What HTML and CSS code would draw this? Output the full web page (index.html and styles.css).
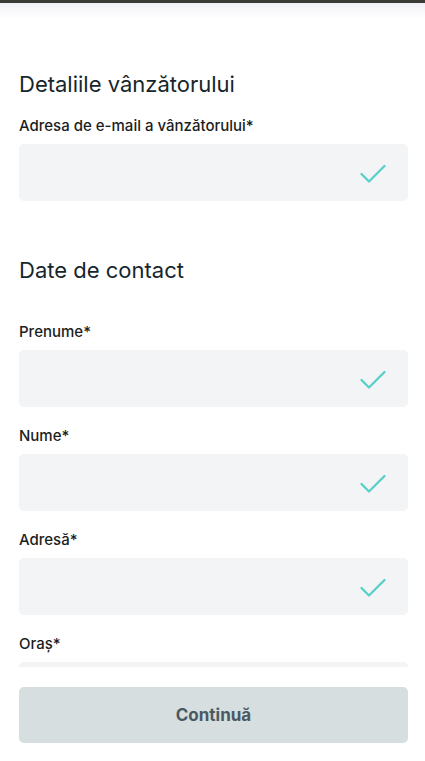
FILE: index.html
```html
<!DOCTYPE html>
<html lang="ro">
<head>
<meta charset="utf-8">
<title>Detaliile vânzătorului</title>
<link rel="stylesheet" href="styles.css">
</head>
<body>
<div class="topbar"></div>
<div class="topfade"></div>
<main class="form">
  <section class="section section-seller">
    <h2 class="section-title">Detaliile vânzătorului</h2>
    <div class="field">
      <label class="field-label">Adresa de e-mail a vânzătorului*</label>
      <div class="input">
        <svg class="check" width="26" height="20" viewBox="0 0 26 20"><polyline points="1.5,10 9,17.5 24.5,2" fill="none" stroke="#55cfc7" stroke-width="2.2" stroke-linecap="round" stroke-linejoin="round"/></svg>
      </div>
    </div>
  </section>
  <section class="section section-contact">
    <h2 class="section-title">Date de contact</h2>
    <div class="field">
      <label class="field-label">Prenume*</label>
      <div class="input">
        <svg class="check" width="26" height="20" viewBox="0 0 26 20"><polyline points="1.5,10 9,17.5 24.5,2" fill="none" stroke="#55cfc7" stroke-width="2.2" stroke-linecap="round" stroke-linejoin="round"/></svg>
      </div>
    </div>
    <div class="field">
      <label class="field-label">Nume*</label>
      <div class="input">
        <svg class="check" width="26" height="20" viewBox="0 0 26 20"><polyline points="1.5,10 9,17.5 24.5,2" fill="none" stroke="#55cfc7" stroke-width="2.2" stroke-linecap="round" stroke-linejoin="round"/></svg>
      </div>
    </div>
    <div class="field">
      <label class="field-label">Adresă*</label>
      <div class="input">
        <svg class="check" width="26" height="20" viewBox="0 0 26 20"><polyline points="1.5,10 9,17.5 24.5,2" fill="none" stroke="#55cfc7" stroke-width="2.2" stroke-linecap="round" stroke-linejoin="round"/></svg>
      </div>
    </div>
    <div class="field">
      <label class="field-label">Oraș*</label>
      <div class="input"></div>
    </div>
  </section>
</main>
<footer class="footer">
  <button class="btn-continue" type="button">Continuă</button>
</footer>
</body>
</html>
```
FILE: styles.css
```css
* { box-sizing: border-box; }
html, body { margin: 0; padding: 0; background: #fff; }
body {
  font-family: Inter, "Open Sans", sans-serif;
  color: #17262c;
  overflow: hidden;
  height: 761px;
}
.topbar {
  height: 3px;
  background: #3b3c38;
}
.topfade {
  height: 16px;
  background: linear-gradient(#f1f2f8, #ffffff);
}
.form {
  padding: 51px 17px 0 19px;
}
.section-title {
  margin: 0;
  font-size: 22px;
  line-height: 28px;
  font-weight: 400;
  color: #16262c;
}
.section-seller .section-title { margin-bottom: 18px; }
.section-contact { margin-top: 55px; }
.section-contact .section-title { margin-bottom: 38px; }
.field {
  display: flex;
  flex-direction: column;
  gap: 8px;
  margin-bottom: 19px;
}
.field-label {
  font-size: 15px;
  line-height: 20px;
  font-weight: 500;
  color: #1b1d1e;
}
.input {
  height: 57px;
  background: #f2f4f5;
  border-radius: 5px;
  display: flex;
  align-items: center;
  justify-content: flex-end;
  padding-right: 22px;
}
.check { display: block; margin-top: 2px; }
.footer {
  position: fixed;
  left: 0;
  right: 0;
  bottom: 0;
  height: 94px;
  background: #fff;
  padding: 20px 17px 18px 19px;
}
.btn-continue {
  width: 100%;
  height: 56px;
  border: none;
  border-radius: 5px;
  background: #d6dee0;
  color: #4a5a62;
  font-family: Inter, "Open Sans", sans-serif;
  font-size: 17px;
  font-weight: 700;
  padding: 0;
}
```
